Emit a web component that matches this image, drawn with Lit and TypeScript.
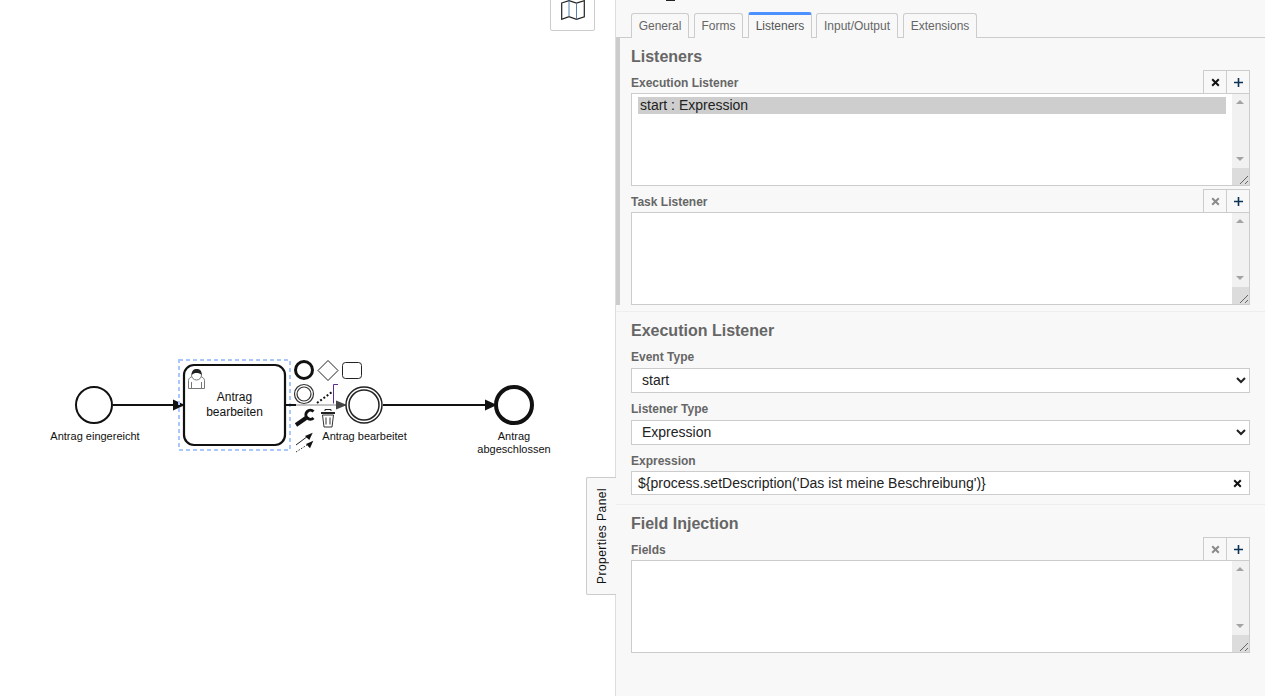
import { LitElement, html, css, svg } from "lit";
import { customElement } from "lit/decorators.js";

@customElement("app-root")
export class AppRoot extends LitElement {
  static styles = css`
    :host { display: block; width: 1265px; height: 696px; overflow: hidden; position: relative; background: #fff;
      font-family: "Liberation Sans", Arial, sans-serif; color: #111; }
    .layout { display: flex; height: 696px; }
    .canvas { width: 615px; flex: none; position: relative; }
    .diagram { position: absolute; left: 0; top: 0; }
    .map { position: absolute; left: 550px; top: -10px; width: 45px; height: 41px; border: 1px solid #ccc; border-radius: 2px; background: #fff;
      display: flex; align-items: flex-end; justify-content: center; padding-bottom: 10px; box-sizing: border-box; }
    .map svg { margin-left: 1px; }
    .panel { flex: 1; background: #f8f8f8; border-left: 1px solid #ddd; box-sizing: border-box; position: relative; color: #666; }
    .cut { position: absolute; left: 50px; top: 0; width: 9px; height: 1px; background: #222; }
    .tabs { display: flex; gap: 5px; margin-top: 13px; padding-left: 15px; height: 25px; border-bottom: 1px solid #ccc; box-sizing: border-box; }
    .tab { height: 25px; box-sizing: border-box; border: 1px solid #ccc; border-bottom: none; border-radius: 3px 3px 0 0; background: #f8f8f8;
      font-size: 12px; line-height: 25px; text-align: center; color: #666; }
    .tab.active { border-top: 3px solid #4d90ff; background: #f8f8f8; height: 26px; line-height: 23px; margin-top: -1px; color: #555; }
    .tab.tight { margin-left: -1px; }
    .group { padding: 0 15px; border-bottom: 1px solid #eee; }
    .group.first { position: relative; height: 274px; box-sizing: border-box; }
    .group.first::before { content: ""; position: absolute; left: 0; top: 0; bottom: 6px; width: 4px; background: #ccc; }
    .group.second { height: 193px; box-sizing: border-box; }
    .group.third { border-bottom: none; }
    h2 { margin: 0; font-size: 16px; line-height: 20px; font-weight: bold; color: #666; padding-top: 9px; }
    .spacer { height: 4px; }
    .label { font-size: 12px; font-weight: bold; color: #666; line-height: 14px; }
    .lab-row { display: flex; justify-content: space-between; align-items: flex-end; height: 22px; }
    .lab-row .label { padding-bottom: 3px; }
    .btns { display: flex; height: 24px; margin-bottom: -1px; }
    .btn { width: 24px; height: 24px; box-sizing: border-box; border: 1px solid #ccc; display: flex; align-items: center; justify-content: center; }
    .btn + .btn { border-left: none; width: 23px; }
    .list { height: 93px; box-sizing: border-box; border: 1px solid #ccc; background: #fff; display: flex; position: relative; }
    .items { flex: 1; padding: 3px 6px 0 6px; font-size: 14px; color: #222; }
    .sel { background: #cecece; height: 17px; line-height: 17px; padding-left: 2px; }
    .sb { width: 17px; background: #f1f1f1; position: relative; }
    .up, .down { width: 0; height: 0; border-left: 4px solid transparent; border-right: 4px solid transparent; position: absolute; left: 4px; }
    .up { top: 6px; border-bottom: 4px solid #a3a3a3; }
    .down { top: 63px; border-top: 4px solid #a3a3a3; }
    .corner { position: absolute; left: 0; right: 0; bottom: 0; height: 17px; background: #dcdcdc; }
    .corner svg { position: absolute; right: 0; bottom: 0; }
    .field-label { margin-top: 9px; margin-bottom: 4px; }
    .event-label { margin-top: 9px; margin-bottom: 4px; }
    .expr-label { margin-top: 9px; margin-bottom: 3px; }
    select { display: block; width: 100%; height: 25px; box-sizing: border-box; border: 1px solid #ccc; border-radius: 0; background: #fff;
      font: 14px "Liberation Sans", Arial, sans-serif; color: #222; padding: 0 6px 2px; margin: 0; outline: none; }
    .input { height: 24px; box-sizing: border-box; border: 1px solid #ccc; background: #fff; font-size: 14px; line-height: 22px; padding: 0 7px 0 6px; color: #222; display: flex; justify-content: space-between; align-items: center; }
    .side { position: absolute; left: 586px; top: 477px; width: 30px; height: 118px; box-sizing: border-box; background: #f8f8f8; border: 1px solid #ccc; border-right: none; border-radius: 2px 0 0 2px; display: flex; align-items: center; justify-content: center; }
    .side span { writing-mode: vertical-rl; transform: rotate(180deg); font-size: 12px; color: #111; letter-spacing: 0.45px; white-space: nowrap; }
    svg text { font-family: "Liberation Sans", Arial, sans-serif; font-size: 11px; fill: #111; text-anchor: middle; }
    svg text.task { font-size: 12px; }
  `;

  private x(color = "#111") {
    return html`<svg width="9" height="9" viewBox="0 0 9 9"><path d="M1.2 1.2 7.8 7.8M7.8 1.2 1.2 7.8" stroke="${color}" stroke-width="2"/></svg>`;
  }
  private plus() {
    return html`<svg width="9" height="9" viewBox="0 0 9 9"><path d="M4.5 0V9M0 4.5H9" stroke="#0c3355" stroke-width="1.6"/></svg>`;
  }
  private listBox(selected: boolean, label: string, xColor: string) {
    return html`
      <div class="lab-row">
        <div class="label">${label}</div>
        <div class="btns"><div class="btn">${this.x(xColor)}</div><div class="btn">${this.plus()}</div></div>
      </div>
      <div class="list">
        <div class="items">${selected ? html`<div class="sel">start : Expression</div>` : ""}</div>
        <div class="sb">
          <div class="up"></div><div class="down"></div>
          <div class="corner"><svg width="14" height="14" viewBox="0 0 14 14"><path d="M5 13 13 5M10 13 13 10" stroke="#666" stroke-width="1" fill="none"/></svg></div>
        </div>
      </div>`;
  }

  private diagram() {
    return svg`
      <svg class="diagram" width="615" height="696" viewBox="0 0 615 696" fill="none">
        <circle cx="94" cy="405" r="18" stroke="#111" stroke-width="2" fill="#fff"/>
        <path d="M113 405H173" stroke="#111" stroke-width="2"/>
        <rect x="184" y="365" width="101" height="80" rx="10" stroke="#111" stroke-width="2.2" fill="#fff"/>
        <path d="M173 399.500 185 405 173 410.500Z" fill="#111"/>
        <rect x="179" y="360" width="111" height="90" stroke="#a9c7fa" stroke-width="2" stroke-dasharray="4 3"/>
        <g stroke="#777" stroke-width="1" fill="#fff">
          <path d="M188.500 388.500V380.500C188.500 378 191 376.800 193.500 376H199.500C202 376.800 204.500 378 204.500 380.500V388.500Z"/>
          <path d="M191.500 388V382M201.500 388V382"/>
          <circle cx="196.500" cy="375" r="5"/>
        </g>
        <path d="M192 375C191.500 370 194 369 197 369C200 369 202 371 201.500 375C200 373 196 372.500 194 373.500C193 374 192.500 374 192 375Z" fill="#222"/>
        <text class="task" x="234.500" y="401">Antrag</text>
        <text class="task" x="234.500" y="416">bearbeiten</text>
        <text x="95" y="440">Antrag eingereicht</text>

        <path d="M286 405H296" stroke="#111" stroke-width="2"/>
        <path d="M296 405H337" stroke="#888" stroke-width="1"/>
        <path d="M336 400.500 347 405 336 409.500Z" fill="#444"/>

        <circle cx="304" cy="370" r="8.500" stroke="#111" stroke-width="3"/>
        <path d="M328 360.500 338 370.500 328 380.500 318 370.500Z" stroke="#222" stroke-width="1"/>
        <rect x="342.500" y="362.500" width="19" height="16" rx="3" stroke="#222" stroke-width="1"/>
        <circle cx="304" cy="394" r="9.500" stroke="#333" stroke-width="1.200"/>
        <circle cx="304" cy="394" r="7" stroke="#333" stroke-width="1.200"/>
        <path d="M317 403 332 392" stroke="#111" stroke-width="2" stroke-dasharray="2 2"/>
        <path d="M338 384.500H333.500V403.500" stroke="#5a2d91" stroke-width="1"/>
        <circle cx="364" cy="405" r="18" stroke="#222" stroke-width="1.500" fill="#fff"/>
        <circle cx="364" cy="405" r="15" stroke="#222" stroke-width="1.500" fill="#fff"/>
        <path d="M296 425 306 418" stroke="#111" stroke-width="4"/>
        <path d="M313.500 411.500A4.500 4.500 0 1 0 313.500 418" stroke="#111" stroke-width="3"/>
        <path d="M321 413H335" stroke="#222" stroke-width="2"/>
        <path d="M325 411V409.500H331V411" stroke="#222" stroke-width="1"/>
        <path d="M322.500 415 324 427H332L333.500 415ZM326 417.500V424.500M330 417.500V424.500" stroke="#333" stroke-width="1"/>
        <path d="M296 445 308 436" stroke="#222" stroke-width="1"/>
        <path d="M312.700 432.700 305 436 309.300 440Z" fill="#111"/>
        <path d="M296 452 307 445" stroke="#333" stroke-width="1" stroke-dasharray="1.500 1.500"/>
        <path d="M313.300 440.700 306 444 310 448.300Z" fill="#111"/>
        <text x="364.500" y="440">Antrag bearbeitet</text>

        <path d="M383 405H486" stroke="#111" stroke-width="2"/>
        <path d="M485 399.500 497 405 485 410.500Z" fill="#111"/>
        <circle cx="514" cy="405" r="18" stroke="#111" stroke-width="4" fill="#fff"/>
        <text x="514" y="440">Antrag</text>
        <text x="514" y="453">abgeschlossen</text>
      </svg>`;
  }

  render() {
    return html`
      <div class="layout">
        <div class="canvas">
          ${this.diagram()}
          <div class="map">
            <svg width="24" height="20" viewBox="0 0 24 20" fill="none" stroke="#222" stroke-width="1.200">
              <path d="M.7 3 8 .7 15.500 3 23.300 .7V16.700L15.500 19.300 8 16.700 .7 19.300Z"/>
              <path d="M8 .7V16.700M15.500 3V19.300" stroke="#5b7fb0" stroke-width="1"/>
            </svg>
          </div>
        </div>
        <div class="panel">
          <div class="cut"></div>
          <div class="tabs">
            <div class="tab" style="width:58px">General</div>
            <div class="tab" style="width:49px">Forms</div>
            <div class="tab active" style="width:64px">Listeners</div>
            <div class="tab tight" style="width:82px">Input/Output</div>
            <div class="tab" style="width:74px">Extensions</div>
          </div>
          <div class="group first">
            <h2>Listeners</h2>
            <div class="spacer"></div>
            ${this.listBox(true, "Execution Listener", "#111")}
            <div class="spacer"></div>
            ${this.listBox(false, "Task Listener", "#8a8a8a")}
          </div>
          <div class="group second">
            <h2>Execution Listener</h2>
            <div class="label event-label">Event Type</div>
            <select><option>start</option></select>
            <div class="label field-label">Listener Type</div>
            <select><option>Expression</option></select>
            <div class="label expr-label">Expression</div>
            <div class="input"><span>\${process.setDescription('Das ist meine Beschreibung')}</span>${this.x("#111")}</div>
          </div>
          <div class="group third">
            <h2>Field Injection</h2>
            <div class="spacer"></div>
            ${this.listBox(false, "Fields", "#8a8a8a")}
          </div>
        </div>
      </div>
      <div class="side"><span>Properties Panel</span></div>
    `;
  }
}
